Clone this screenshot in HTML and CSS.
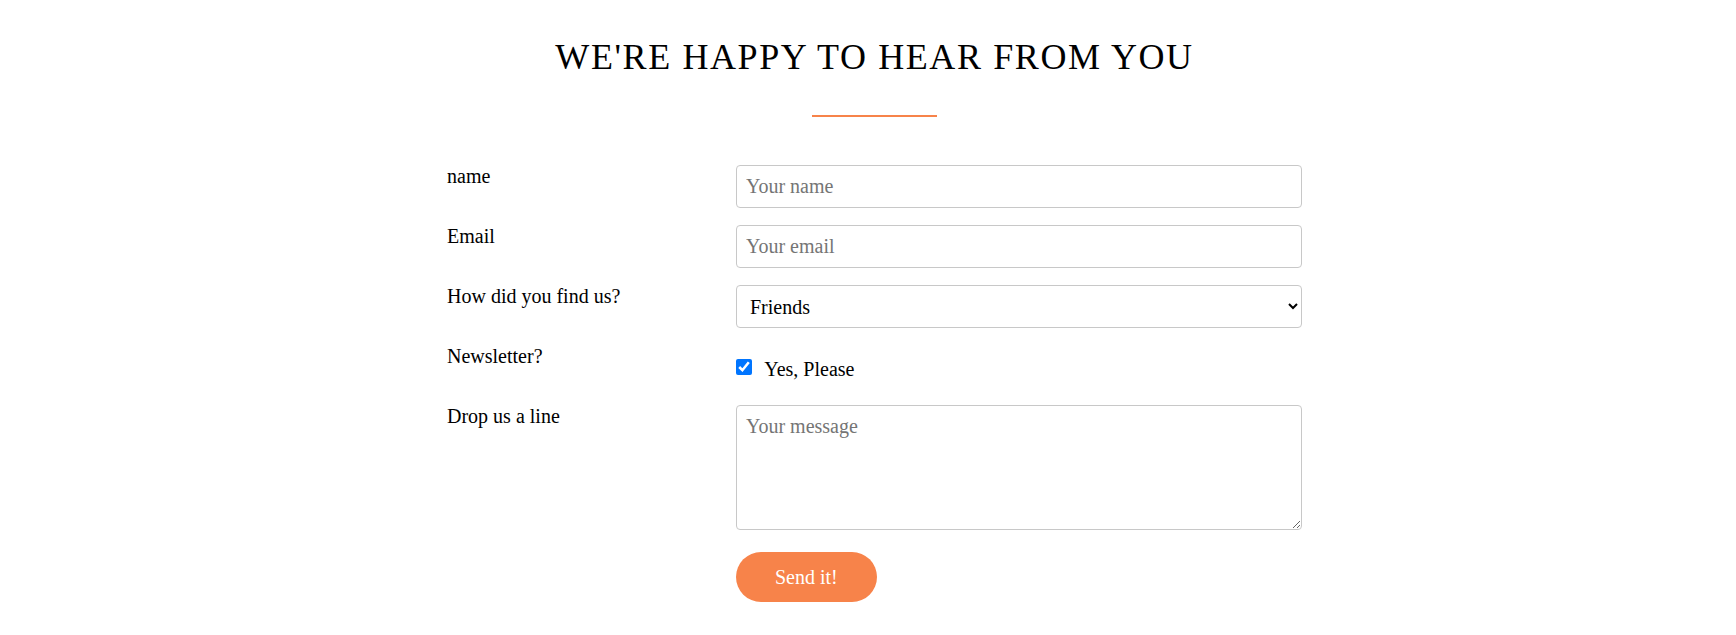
FILE: index.html
```html
<!DOCTYPE html>
<html lang="en">
<head>
<meta charset="utf-8">
<title>Contact</title>
<link rel="stylesheet" href="styles.css">
</head>
<body>
<div class="page">
  <section class="contact">
    <h1 class="title">WE'RE HAPPY TO HEAR FROM YOU</h1>
    <div class="rule"></div>
    <form class="form">
      <label class="label" for="name">name</label>
      <input class="field" id="name" type="text" placeholder="Your name">

      <label class="label" for="email">Email</label>
      <input class="field" id="email" type="email" placeholder="Your email">

      <label class="label" for="find">How did you find us?</label>
      <select class="field select" id="find">
        <option>Friends</option>
        <option>Search engine</option>
        <option>Advertisement</option>
      </select>

      <span class="label">Newsletter?</span>
      <label class="check">
        <input class="checkbox" type="checkbox" checked>
        <span>Yes, Please</span>
      </label>

      <label class="label" for="msg">Drop us a line</label>
      <textarea class="field area" id="msg" placeholder="Your message"></textarea>

      <span class="label"></span>
      <div class="actions">
        <button class="send" type="button">Send it!</button>
      </div>
    </form>
  </section>
</div>
</body>
</html>
```
FILE: styles.css
```css
html, body {
  margin: 0;
  padding: 0;
  background: #ffffff;
}

body {
  font-family: "Liberation Serif", "Times New Roman", serif;
  color: #000000;
  font-size: 20px;
}

.page {
  padding-left: 13px;
}

.contact {
  width: 855px;
  margin: 0 auto;
  padding-top: 36px;
}

.title {
  margin: 0;
  font-weight: normal;
  font-size: 36px;
  letter-spacing: 1.6px;
  text-align: center;
  line-height: normal;
}

.rule {
  width: 125px;
  height: 2px;
  background: #f7834a;
  margin: 37px auto 0;
}

.form {
  display: grid;
  grid-template-columns: 289px 566px;
  row-gap: 17px;
  margin-top: 48px;
  padding-bottom: 30px;
}

.label {
  font-size: 20px;
  line-height: normal;
}

.field {
  box-sizing: border-box;
  width: 100%;
  height: 43px;
  margin: 0;
  padding: 9px;
  border: 1px solid #c8c8c8;
  border-radius: 4px;
  font-family: "Liberation Serif", "Times New Roman", serif;
  font-size: 20px;
  color: #000000;
  background: #ffffff;
  outline: none;
}

.field::placeholder {
  color: #757575;
}

.select {
  padding: 9px 6px 9px 9px;
}

.check {
  display: block;
  height: 43px;
  box-sizing: border-box;
  padding-top: 13px;
  font-size: 20px;
  line-height: normal;
}

.checkbox {
  width: 16px;
  height: 16px;
  margin: 0 8px 0 0;
  vertical-align: 1px;
}

.area {
  height: 125px;
  resize: both;
  display: block;
}

.actions {
  padding-top: 5px;
}

.send {
  height: 50px;
  padding: 0 39px;
  border: none;
  border-radius: 25px;
  background: #f7834a;
  color: #ffffff;
  font-family: "Liberation Serif", "Times New Roman", serif;
  font-size: 20px;
  cursor: pointer;
}
```
